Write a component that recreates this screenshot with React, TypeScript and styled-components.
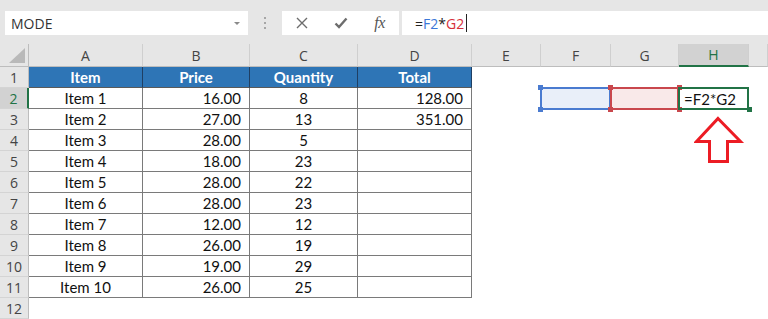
import React from 'react';
import styled, { createGlobalStyle, css } from 'styled-components';

const GlobalStyle = createGlobalStyle`
  html, body {
    margin: 0;
    padding: 0;
    background: #fff;
    overflow: hidden;
  }
  body {
    font-family: 'Open Sans', 'Noto Sans', sans-serif;
  }
  * {
    box-sizing: border-box;
  }
`;

const Window = styled.div`
  position: relative;
  width: 768px;
  height: 319px;
  overflow: hidden;
  background: #fff;
`;

const FormulaBar = styled.div`
  display: flex;
  align-items: flex-start;
  height: 44px;
  padding: 11px 0 0 5px;
  background: #e6e6e6;
`;

const NameBox = styled.div`
  display: flex;
  align-items: center;
  justify-content: space-between;
  width: 243px;
  height: 24px;
  padding: 0 8px 0 6px;
  background: #fff;
  color: #333;
  font-size: 14px;
`;

const DropCaret = styled.span`
  width: 0;
  height: 0;
  border-left: 3px solid transparent;
  border-right: 3px solid transparent;
  border-top: 3px solid #8a8a8a;
`;

const Grip = styled.div`
  display: flex;
  flex-direction: column;
  align-items: center;
  justify-content: center;
  gap: 3px;
  width: 34px;
  height: 24px;
  span {
    width: 2px;
    height: 2px;
    background: #a6a6a6;
  }
`;

const Controls = styled.div`
  display: flex;
  width: 117px;
  height: 24px;
  background: #fff;
`;

const ControlSlot = styled.div`
  display: flex;
  align-items: center;
  justify-content: center;
  width: 39px;
  height: 24px;
  color: #6d6d6d;
`;

const Fx = styled.span`
  font-family: 'Liberation Serif', 'DejaVu Serif', serif;
  font-style: italic;
  font-size: 16px;
  color: #555;
  letter-spacing: -0.5px;
`;

const FormulaInput = styled.div`
  display: flex;
  align-items: center;
  flex: 1;
  height: 24px;
  margin-left: 3px;
  padding-left: 13px;
  background: #fff;
  font-size: 14px;
  color: #222;
`;

const Ref = styled.span<{ $tone: 'blue' | 'red' }>`
  color: ${(p) => (p.$tone === 'blue' ? '#3c78d8' : '#d6303a')};
`;

const Caret = styled.span`
  display: inline-block;
  width: 1px;
  height: 18px;
  margin-left: 2px;
  background: #222;
`;

const Sheet = styled.div`
  display: grid;
  grid-template-columns: 29px 114px 107px 108px 114px 69px 70px 68px 70px 1fr;
  grid-template-rows: 23px repeat(12, 21px);
`;

const Corner = styled.div`
  position: relative;
  background: #e6e6e6;
  border-right: 1px solid #bdbdbd;
  border-bottom: 1px solid #bdbdbd;
  svg {
    position: absolute;
    right: 3px;
    bottom: 3px;
  }
`;

const ColHead = styled.div<{ $active?: boolean }>`
  display: flex;
  align-items: center;
  justify-content: center;
  background: #e6e6e6;
  border-right: 1px solid #cfcfcf;
  border-bottom: 1px solid #bdbdbd;
  color: #444;
  font-size: 14px;
  ${(p) =>
    p.$active &&
    css`
      background: #d2d2d2;
      color: #217346;
      border-bottom: 2px solid #217346;
    `}
`;

const RowHead = styled.div<{ $active?: boolean }>`
  display: flex;
  align-items: center;
  justify-content: center;
  background: #e6e6e6;
  border-right: 1px solid #bdbdbd;
  border-bottom: 1px solid #d4d4d4;
  color: #444;
  font-size: 14px;
  ${(p) =>
    p.$active &&
    css`
      background: #d2d2d2;
      color: #217346;
      border-right: 2px solid #217346;
    `}
`;

type Kind = 'head' | 'center' | 'right' | 'blank';

const Cell = styled.div<{ $kind: Kind; $table?: boolean }>`
  position: relative;
  display: flex;
  align-items: center;
  padding: 0 8px;
  font-family: Lato, 'Open Sans', sans-serif;
  font-size: 15px;
  color: #111;
  white-space: nowrap;
  justify-content: ${(p) => (p.$kind === 'right' ? 'flex-end' : 'center')};
  ${(p) =>
    p.$table &&
    css`
      border-right: 1px solid #7a7a7a;
      border-bottom: 1px solid #7a7a7a;
    `}
  ${(p) =>
    p.$kind === 'head' &&
    css`
      background: #2e75b6;
      color: #fff;
      font-weight: 700;
      border-right-color: #1f3f63;
      border-bottom-color: #5a5a5a;
    `}
`;

const tones = {
  blue: { line: '#4a7bd0', fill: '#e9eff9' },
  red: { line: '#c9474d', fill: '#f9e9e9' },
  green: { line: '#217346', fill: 'transparent' },
};

const RangeBox = styled.span<{ $tone: keyof typeof tones }>`
  position: absolute;
  top: -1px;
  left: -1px;
  right: 0;
  bottom: -1px;
  border: 2px solid ${(p) => tones[p.$tone].line};
  background: ${(p) => tones[p.$tone].fill};
`;

const Handle = styled.span<{ $tone: keyof typeof tones; $at: string }>`
  position: absolute;
  width: 5px;
  height: 5px;
  background: ${(p) => tones[p.$tone].line};
  ${(p) => (p.$at.includes('t') ? 'top: -3px;' : 'bottom: -3px;')}
  ${(p) => (p.$at.includes('l') ? 'left: -3px;' : 'right: -3px;')}
`;

const CellText = styled.span`
  position: relative;
  font-size: 15px;
  color: #111;
`;

const ActiveCell = styled(Cell)`
  justify-content: flex-start;
  padding-left: 5px;
`;

const Arrow = styled.svg`
  position: absolute;
  left: 694px;
  top: 115px;
`;

const rows: [string, string, string, string][] = [
  ['Item 1', '16.00', '8', '128.00'],
  ['Item 2', '27.00', '13', '351.00'],
  ['Item 3', '28.00', '5', ''],
  ['Item 4', '18.00', '23', ''],
  ['Item 5', '28.00', '22', ''],
  ['Item 6', '28.00', '23', ''],
  ['Item 7', '12.00', '12', ''],
  ['Item 8', '26.00', '19', ''],
  ['Item 9', '19.00', '29', ''],
  ['Item 10', '26.00', '25', ''],
];

const letters = ['A', 'B', 'C', 'D', 'E', 'F', 'G', 'H', ''];

const Blanks = ({ n }: { n: number }) => (
  <>
    {Array.from({ length: n }).map((_, i) => (
      <Cell key={i} $kind="blank" />
    ))}
  </>
);

export default function App() {
  return (
    <Window>
      <GlobalStyle />
      <FormulaBar>
        <NameBox>
          MODE
          <DropCaret />
        </NameBox>
        <Grip>
          <span />
          <span />
          <span />
        </Grip>
        <Controls>
          <ControlSlot>
            <svg width="12" height="12" viewBox="0 0 12 12">
              <path d="M1 1 L11 11 M11 1 L1 11" stroke="#6d6d6d" strokeWidth="1.4" />
            </svg>
          </ControlSlot>
          <ControlSlot>
            <svg width="14" height="12" viewBox="0 0 14 12">
              <path d="M1.5 6.5 L5 10 L12.5 1.5" stroke="#6d6d6d" strokeWidth="2.4" fill="none" />
            </svg>
          </ControlSlot>
          <ControlSlot>
            <Fx>fx</Fx>
          </ControlSlot>
        </Controls>
        <FormulaInput>
          =<Ref $tone="blue">F2</Ref>*<Ref $tone="red">G2</Ref>
          <Caret />
        </FormulaInput>
      </FormulaBar>

      <Sheet>
        <Corner>
          <svg width="16" height="15" viewBox="0 0 16 15">
            <polygon points="16,0 16,15 0,15" fill="#b9b9b9" />
          </svg>
        </Corner>
        {letters.map((l, i) => (
          <ColHead key={i} $active={l === 'H'}>
            {l}
          </ColHead>
        ))}

        <RowHead>1</RowHead>
        <Cell $kind="head" $table>Item</Cell>
        <Cell $kind="head" $table>Price</Cell>
        <Cell $kind="head" $table>Quantity</Cell>
        <Cell $kind="head" $table>Total</Cell>
        <Blanks n={5} />

        {rows.map((r, i) => (
          <React.Fragment key={i}>
            <RowHead $active={i === 0}>{i + 2}</RowHead>
            <Cell $kind="center" $table>{r[0]}</Cell>
            <Cell $kind="right" $table>{r[1]}</Cell>
            <Cell $kind="center" $table>{r[2]}</Cell>
            <Cell $kind="right" $table>{r[3]}</Cell>
            <Cell $kind="blank" />
            {i === 0 ? (
              <>
                <Cell $kind="blank">
                  <RangeBox $tone="blue" />
                  <Handle $tone="blue" $at="tl" />
                  <Handle $tone="blue" $at="bl" />
                </Cell>
                <Cell $kind="blank">
                  <RangeBox $tone="red" />
                  <Handle $tone="red" $at="tl" />
                  <Handle $tone="red" $at="bl" />
                  <Handle $tone="red" $at="tr" />
                  <Handle $tone="red" $at="br" />
                </Cell>
                <ActiveCell $kind="blank">
                  <RangeBox $tone="green" />
                  <Handle $tone="green" $at="br" />
                  <CellText>=F2*G2</CellText>
                </ActiveCell>
                <Cell $kind="blank" />
              </>
            ) : (
              <Blanks n={4} />
            )}
          </React.Fragment>
        ))}

        <RowHead>12</RowHead>
        <Blanks n={9} />
      </Sheet>

      <Arrow width="52" height="52" viewBox="0 0 52 52">
        <polygon
          points="24,3.5 46.5,26.5 33.5,26.5 33.5,46.5 15.5,46.5 15.5,26.5 2.5,26.5"
          fill="none"
          stroke="#ec1c24"
          strokeWidth="3"
        />
      </Arrow>
    </Window>
  );
}
